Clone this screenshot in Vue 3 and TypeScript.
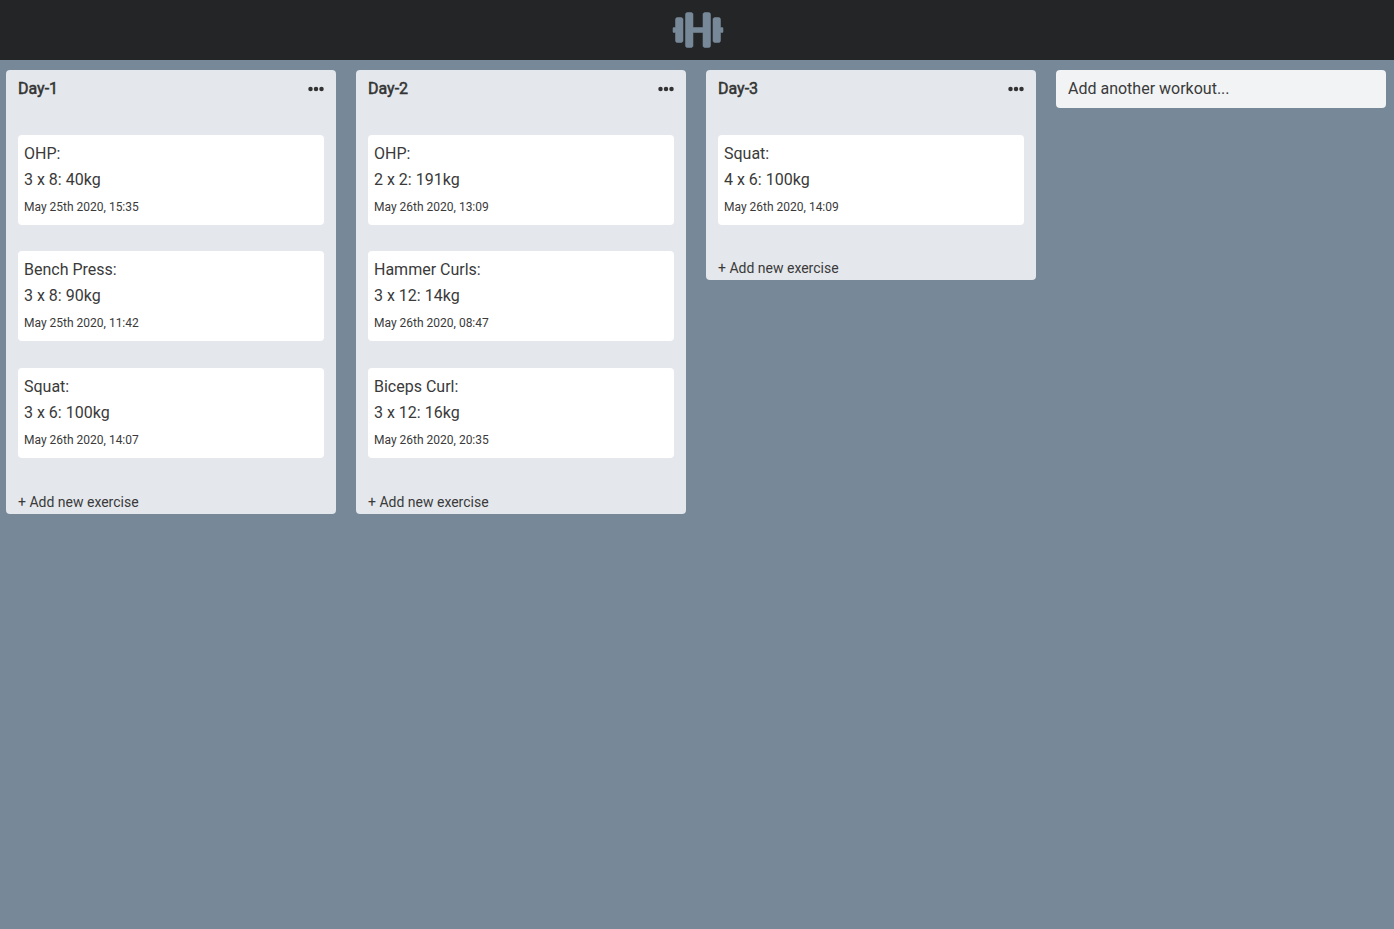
<script setup lang="ts">
interface Exercise {
  name: string
  sets: string
  date: string
}

interface Workout {
  title: string
  exercises: Exercise[]
}

const workouts: Workout[] = [
  {
    title: 'Day-1',
    exercises: [
      { name: 'OHP:', sets: '3 x 8: 40kg', date: 'May 25th 2020, 15:35' },
      { name: 'Bench Press:', sets: '3 x 8: 90kg', date: 'May 25th 2020, 11:42' },
      { name: 'Squat:', sets: '3 x 6: 100kg', date: 'May 26th 2020, 14:07' },
    ],
  },
  {
    title: 'Day-2',
    exercises: [
      { name: 'OHP:', sets: '2 x 2: 191kg', date: 'May 26th 2020, 13:09' },
      { name: 'Hammer Curls:', sets: '3 x 12: 14kg', date: 'May 26th 2020, 08:47' },
      { name: 'Biceps Curl:', sets: '3 x 12: 16kg', date: 'May 26th 2020, 20:35' },
    ],
  },
  {
    title: 'Day-3',
    exercises: [{ name: 'Squat:', sets: '4 x 6: 100kg', date: 'May 26th 2020, 14:09' }],
  },
]
</script>

<template>
  <div class="app">
    <header class="navbar">
      <svg class="logo" viewBox="0 0 640 512" aria-hidden="true">
        <path
          fill="currentColor"
          stroke="currentColor"
          stroke-width="7"
          d="M104 96H56c-13.3 0-24 10.7-24 24v104H8c-4.4 0-8 3.6-8 8v48c0 4.4 3.6 8 8 8h24v104c0 13.3 10.7 24 24 24h48c13.3 0 24-10.7 24-24V120c0-13.3-10.7-24-24-24zm528 128h-24V120c0-13.3-10.7-24-24-24h-48c-13.3 0-24 10.7-24 24v272c0 13.3 10.7 24 24 24h48c13.3 0 24-10.7 24-24V288h24c4.4 0 8-3.6 8-8v-48c0-4.4-3.6-8-8-8zM456 32h-48c-13.3 0-24 10.7-24 24v168H256V56c0-13.3-10.7-24-24-24h-48c-13.3 0-24 10.7-24 24v400c0 13.3 10.7 24 24 24h48c13.3 0 24-10.7 24-24V288h128v168c0 13.3 10.7 24 24 24h48c13.3 0 24-10.7 24-24V56c0-13.3-10.7-24-24-24z"
        />
      </svg>
    </header>
    <main class="board">
      <section v-for="workout in workouts" :key="workout.title" class="column">
        <div class="column-head">
          <h2 class="title">{{ workout.title }}</h2>
          <svg class="menu" viewBox="0 0 512 512" role="button" aria-label="Workout menu">
            <circle cx="80" cy="256" r="72" />
            <circle cx="256" cy="256" r="72" />
            <circle cx="432" cy="256" r="72" />
          </svg>
        </div>
        <div class="cards">
          <article v-for="exercise in workout.exercises" :key="exercise.name" class="card">
            <p class="line">{{ exercise.name }}</p>
            <p class="line">{{ exercise.sets }}</p>
            <p class="date">{{ exercise.date }}</p>
          </article>
        </div>
        <div class="add-exercise">+ Add new exercise</div>
      </section>
      <div class="add-workout">Add another workout...</div>
    </main>
  </div>
</template>

<style>
body {
  margin: 0;
  background: #778899;
}
</style>

<style scoped>
.app {
  min-height: 100vh;
  background: #778899;
  color: #3a3a3a;
  font-family: Roboto, "Liberation Sans", sans-serif;
  font-size: 16px;
}
.navbar {
  display: flex;
  align-items: center;
  justify-content: center;
  box-sizing: border-box;
  height: 60px;
  padding-left: 2px;
  background: #242526;
  color: #778899;
}
.logo {
  width: 50px;
  height: 40px;
  overflow: visible;
}
.board {
  display: flex;
  align-items: flex-start;
  gap: 20px;
  padding: 10px 6px;
}
.column,
.add-workout {
  box-sizing: border-box;
  flex: 0 0 330px;
  padding: 0 12px;
  border-radius: 4px;
}
.column {
  background: #e4e7eb;
}
.column-head {
  display: flex;
  align-items: center;
  justify-content: space-between;
  height: 38px;
}
.title {
  margin: 0;
  color: #333;
  font-size: 16px;
  font-weight: 400;
  line-height: 20px;
  -webkit-text-stroke: 0.5px #333;
}
.menu {
  width: 16px;
  height: 16px;
  fill: #333;
}
.cards {
  display: flex;
  flex-direction: column;
  gap: 26.7px;
  padding-top: 26.7px;
}
.card {
  box-sizing: border-box;
  height: 90px;
  padding: 6px 6px 5px;
  border-radius: 4px;
  background: #fff;
}
.line,
.date {
  margin: 0;
  line-height: 26px;
}
.date {
  padding-top: 1px;
  font-size: 12px;
}
.add-exercise {
  padding: 32.7px 0 1px;
  font-size: 14px;
  line-height: 22px;
}
.add-workout {
  height: 38px;
  background: #f1f3f5;
  line-height: 38px;
}
</style>
